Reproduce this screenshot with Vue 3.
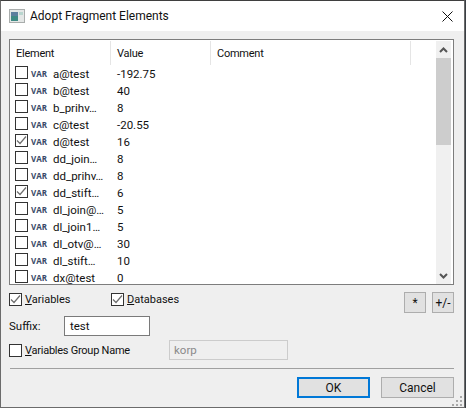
<script setup>
const rows = [
  { name: 'a@test', value: '-192.75', on: false },
  { name: 'b@test', value: '40', on: false },
  { name: 'b_prihv…', value: '8', on: false },
  { name: 'c@test', value: '-20.55', on: false },
  { name: 'd@test', value: '16', on: true },
  { name: 'dd_join…', value: '8', on: false },
  { name: 'dd_prihv…', value: '8', on: false },
  { name: 'dd_stift…', value: '6', on: true },
  { name: 'dl_join@…', value: '5', on: false },
  { name: 'dl_join1…', value: '5', on: false },
  { name: 'dl_otv@…', value: '30', on: false },
  { name: 'dl_stift…', value: '10', on: false },
  { name: 'dx@test', value: '0', on: false },
]
</script>

<template>
  <div class="window">
    <header class="titlebar">
      <svg class="appicon" width="16" height="14" viewBox="0 0 16 14">
        <rect x="0.5" y="0.5" width="15" height="13" fill="#e4e7e6" stroke="#a9adac" />
        <rect x="2" y="3" width="7" height="9" fill="#3f8a84" />
        <rect x="2" y="3" width="7" height="4" fill="#5d7f9e" />
        <rect x="10" y="3" width="4" height="3" fill="#b9d6cf" />
      </svg>
      <span class="title">Adopt Fragment Elements</span>
      <svg class="close" width="11" height="11" viewBox="0 0 11 11">
        <path d="M0.5 0.5L10.5 10.5M10.5 0.5L0.5 10.5" stroke="#111" fill="none" />
      </svg>
    </header>

    <main class="body">
      <section class="list">
        <div class="table">
          <div class="thead">
            <div class="th c1">Element</div>
            <div class="th c2">Value</div>
            <div class="th c3">Comment</div>
          </div>
          <div v-for="r in rows" :key="r.name" class="row">
            <span class="box rowbox">
              <svg v-if="r.on" width="11" height="11" viewBox="0 0 11 11">
                <path d="M1 5.5L4 8.5L10 1.5" stroke="#6e6e6e" stroke-width="1.2" fill="none" />
              </svg>
            </span>
            <span class="var">VAR</span>
            <span class="name">{{ r.name }}</span>
            <span class="value">{{ r.value }}</span>
          </div>
        </div>
        <div class="scrollbar">
          <div class="sbtn">
            <svg width="9" height="6" viewBox="0 0 9 6"><path d="M1 5L4.5 1.5L8 5" stroke="#555" stroke-width="2" fill="none" /></svg>
          </div>
          <div class="thumb"></div>
          <div class="track"></div>
          <div class="sbtn">
            <svg width="9" height="6" viewBox="0 0 9 6"><path d="M1 1L4.5 4.5L8 1" stroke="#555" stroke-width="2" fill="none" /></svg>
          </div>
        </div>
      </section>

      <div class="opts">
        <label class="chk first">
          <span class="box">
            <svg width="11" height="11" viewBox="0 0 11 11"><path d="M1 5.5L4 8.5L10 1.5" stroke="#6e6e6e" stroke-width="1.2" fill="none" /></svg>
          </span>
          <span><u>V</u>ariables</span>
        </label>
        <label class="chk second">
          <span class="box">
            <svg width="11" height="11" viewBox="0 0 11 11"><path d="M1 5.5L4 8.5L10 1.5" stroke="#6e6e6e" stroke-width="1.2" fill="none" /></svg>
          </span>
          <span><u>D</u>atabases</span>
        </label>
        <div class="tools">
          <button class="tool">*</button>
          <button class="tool">+/-</button>
        </div>
      </div>

      <div class="suffix">
        <span class="suffix-label">Suffix:</span>
        <span class="input">test</span>
      </div>

      <div class="group">
        <label class="chk group-chk">
          <span class="box"></span>
          <span class="group-text"><u>V</u>ariables Group Name</span>
        </label>
        <span class="input disabled">korp</span>
      </div>

      <hr class="sep" />

      <div class="actions">
        <button class="btn default">OK</button>
        <button class="btn">Cancel</button>
      </div>
      <svg class="grip" width="11" height="11" viewBox="0 0 11 11" fill="#a8a8a8">
        <rect x="8" y="0" width="2" height="2" />
        <rect x="4" y="4" width="2" height="2" />
        <rect x="8" y="4" width="2" height="2" />
        <rect x="0" y="8" width="2" height="2" />
        <rect x="4" y="8" width="2" height="2" />
        <rect x="8" y="8" width="2" height="2" />
      </svg>
    </main>
  </div>
</template>

<style>
html, body { margin: 0; background: #3a3f44; }
</style>

<style scoped>
.window {
  width: 465px;
  height: 408px;
  box-sizing: border-box;
  border: 1px solid #6b6b6b;
  border-top-color: #3f3f3f;
  display: flex;
  flex-direction: column;
  font: 11.5px Roboto, "Open Sans", sans-serif;
  color: #111;
  overflow: hidden;
}
.titlebar {
  height: 30px;
  flex: none;
  background: #fff;
  display: flex;
  align-items: center;
  padding: 0 11px 0 8px;
}
.appicon { margin-right: 5px; }
.title { flex: 1; font-size: 12px; }
.body {
  flex: 1;
  background: #efefef;
  padding: 8px 10px 0 8px;
  position: relative;
  display: flex;
  flex-direction: column;
}
.list {
  height: 246px;
  box-sizing: border-box;
  border: 1px solid #7d7d7d;
  background: #fff;
  display: flex;
  padding: 1px 2px 0 0;
  overflow: hidden;
}
.table { flex: 1; overflow: hidden; }
.thead { display: flex; height: 24px; }
.th { line-height: 26px; box-sizing: border-box; border-right: 1px solid #e5e5e5; padding-left: 6px; font-size: 11px; letter-spacing: -0.25px; }
.c1 { width: 101px; }
.c2 { width: 100px; }
.c3 { width: 200px; }
.row { display: flex; align-items: center; height: 17px; padding-left: 5px; }
.box {
  box-sizing: border-box;
  width: 13px;
  height: 13px;
  flex: none;
  border: 1px solid #333;
  background: #fff;
  display: block;
}
.rowbox { margin-top: -2px; }
.box svg { display: block; }
.var {
  width: 22px;
  margin-left: 3px;
  flex: none;
  font: bold 8px "Open Sans", sans-serif;
  color: #3a4a68;
}
.name { width: 64px; flex: none; }
.value { flex: none; }
.scrollbar {
  width: 15px;
  flex: none;
  display: flex;
  flex-direction: column;
  background: #f0f0f0;
}
.sbtn { height: 17px; flex: none; display: flex; align-items: center; justify-content: center; }
.thumb { height: 87px; flex: none; background: #cdcdcd; }
.track { flex: 1; }
.opts { display: flex; height: 30px; flex: none; padding-top: 7px; box-sizing: border-box; }
.chk { display: flex; align-items: center; gap: 3px; font-size: 11px; }
.first { width: 102px; height: 14px; }
.second { height: 14px; }
.group-text { letter-spacing: -0.25px; }
.tools { margin-left: auto; display: flex; gap: 6px; }
.tool {
  width: 22px;
  height: 21px;
  box-sizing: border-box;
  border: 1px solid #adadad;
  background: #e1e1e1;
  padding: 0;
  font: 12px Roboto, sans-serif;
  color: #111;
}
.suffix { display: flex; align-items: center; height: 20px; flex: none; margin-top: 1px; }
.suffix-label { width: 55px; }
.input {
  box-sizing: border-box;
  display: block;
  width: 86px;
  height: 20px;
  line-height: 18px;
  border: 1px solid #7a7a7a;
  background: #fff;
  padding-left: 5px;
}
.group { display: flex; align-items: center; height: 20px; flex: none; margin-top: 4px; }
.group-chk { width: 160px; height: 15px; }
.disabled {
  width: 119px;
  background: #efefef;
  border: 1px solid #cccccc;
  color: #8a8a8a;
  padding-left: 4px;
}
.sep { height: 1px; border: 0; margin: 8px 0 0 1px; background: #a0a0a0; flex: none; }
.actions { display: flex; justify-content: flex-end; gap: 11px; margin-top: 8px; }
.btn {
  width: 73px;
  height: 21px;
  box-sizing: border-box;
  border: 1px solid #adadad;
  background: #e1e1e1;
  padding: 0;
  font: 12px Roboto, sans-serif;
  color: #111;
}
.default { border: 2px solid #0078d7; }
.grip { position: absolute; right: 1px; bottom: 0; }
</style>
